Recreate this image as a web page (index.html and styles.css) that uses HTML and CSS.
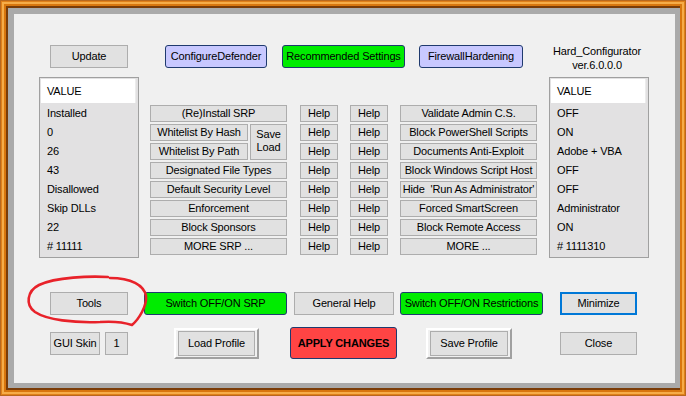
FILE: index.html
```html
<!DOCTYPE html>
<html>
<head>
  <meta charset="UTF-8">
  <title>Hard_Configurator</title>
  <link rel="stylesheet" href="styles.css">
</head>
<body>
  <div class="window">
    <div class="client">

      <div class="row-top">
        <button class="btn btn-update">Update</button>
        <button class="btn btn-blue btn-defender">ConfigureDefender</button>
        <button class="btn btn-green btn-recommended">Recommended Settings</button>
        <button class="btn btn-blue btn-firewall">FirewallHardening</button>
        <div class="title">Hard_Configurator<br>ver.6.0.0.0</div>
      </div>

      <div class="row-main">
        <div class="list list-left">
          <div class="list-head">VALUE</div>
          <div class="list-item">Installed</div>
          <div class="list-item">0</div>
          <div class="list-item">26</div>
          <div class="list-item">43</div>
          <div class="list-item">Disallowed</div>
          <div class="list-item">Skip DLLs</div>
          <div class="list-item">22</div>
          <div class="list-item"># 11111</div>
        </div>

        <div class="options">
          <button class="btn col-a">(Re)Install SRP</button>
          <button class="btn col-h1">Help</button>
          <button class="btn col-h2">Help</button>
          <button class="btn col-c">Validate Admin C.S.</button>

          <button class="btn col-hash">Whitelist By Hash</button>
          <button class="btn col-save">Save<br>Load</button>
          <button class="btn col-h1">Help</button>
          <button class="btn col-h2">Help</button>
          <button class="btn col-c">Block PowerShell Scripts</button>

          <button class="btn col-hash">Whitelist By Path</button>
          <button class="btn col-h1">Help</button>
          <button class="btn col-h2">Help</button>
          <button class="btn col-c">Documents Anti-Exploit</button>

          <button class="btn col-a">Designated File Types</button>
          <button class="btn col-h1">Help</button>
          <button class="btn col-h2">Help</button>
          <button class="btn col-c">Block Windows Script Host</button>

          <button class="btn col-a">Default Security Level</button>
          <button class="btn col-h1">Help</button>
          <button class="btn col-h2">Help</button>
          <button class="btn col-c">Hide &nbsp;'Run As Administrator'</button>

          <button class="btn col-a">Enforcement</button>
          <button class="btn col-h1">Help</button>
          <button class="btn col-h2">Help</button>
          <button class="btn col-c">Forced SmartScreen</button>

          <button class="btn col-a">Block Sponsors</button>
          <button class="btn col-h1">Help</button>
          <button class="btn col-h2">Help</button>
          <button class="btn col-c">Block Remote Access</button>

          <button class="btn col-a">MORE SRP ...</button>
          <button class="btn col-h1">Help</button>
          <button class="btn col-h2">Help</button>
          <button class="btn col-c">MORE ...</button>
        </div>

        <div class="list list-right">
          <div class="list-head">VALUE</div>
          <div class="list-item">OFF</div>
          <div class="list-item">ON</div>
          <div class="list-item">Adobe + VBA</div>
          <div class="list-item">OFF</div>
          <div class="list-item">OFF</div>
          <div class="list-item">Administrator</div>
          <div class="list-item">ON</div>
          <div class="list-item"># 1111310</div>
        </div>
      </div>

      <div class="row-actions">
        <button class="btn btn-tools">Tools</button>
        <button class="btn btn-green btn-srp">Switch OFF/ON SRP</button>
        <button class="btn btn-general">General Help</button>
        <button class="btn btn-green btn-restr">Switch OFF/ON Restrictions</button>
        <button class="btn btn-focus btn-minimize">Minimize</button>
      </div>

      <div class="row-bottom">
        <button class="btn btn-skin">GUI Skin</button>
        <button class="btn btn-skin-num">1</button>
        <div class="raised raised-load"><button class="btn">Load Profile</button></div>
        <button class="btn btn-apply">APPLY CHANGES</button>
        <div class="raised raised-save"><button class="btn">Save Profile</button></div>
        <button class="btn btn-close">Close</button>
      </div>

    </div>

    <!-- red hand-drawn mark round the Tools button -->
    <svg class="mark" width="686" height="396" viewBox="0 0 686 396">
      <path d="M108 277 C90 276 56 277 39 285 C27 291 25 305 35 312 C47 320 74 323 100 322 C114 321 126 323 132 325 C139 319 147 306 146 296 C144 285 131 278 110 278"
            fill="none" stroke="#e8222a" stroke-width="2.6" stroke-linecap="round" stroke-linejoin="round"/>
    </svg>
  </div>
</body>
</html>
```

FILE: styles.css
```css
body {
  margin: 0;
  background-color: #f0f0f0;
  font-family: "Liberation Sans", Arial, sans-serif;
  font-size: 11px;
  letter-spacing: -0.15px;
  color: #000000;
}

.window {
  position: relative;
  width: 686px;
  height: 396px;
  box-sizing: border-box;
  padding: 8px 6px 8px 8px;
  background-color: #e8881c;
  box-shadow:
    inset 0 0 0 1px #b8681e,
    inset 0 0 0 2px #e0801a,
    inset 0 0 0 4px #f6ac48,
    inset 0 0 0 6px #d8760e,
    inset 0 0 0 8px #7a3c08;
}

.client {
  height: 100%;
  box-sizing: border-box;
  border-style: solid;
  border-width: 6px 5px 5px 6px;
  border-color: #aaaaaa;
  background-color: #f0f0f0;
}

.btn {
  display: flex;
  align-items: center;
  justify-content: center;
  box-sizing: border-box;
  margin: 0;
  padding: 0;
  border: 1px solid #adadad;
  background-color: #e1e1e1;
  font: inherit;
  letter-spacing: inherit;
  color: #000000;
  white-space: nowrap;
  line-height: 13px;
}

.btn-blue {
  background-color: #c8c8ff;
  border-color: #1f3a6e;
  border-radius: 3px;
}

.btn-green {
  background-color: #00ec00;
  border-color: #1f3a6e;
  border-radius: 3px;
}

.btn-focus {
  border: 2px solid #0078d7;
}

/* top row */
.row-top {
  display: flex;
  align-items: flex-start;
  margin-top: 31px;
  height: 23px;
}

.row-top .btn {
  height: 23px;
}

.btn-update { margin-left: 36px; width: 78px; }
.btn-defender { margin-left: 37px; width: 102px; }
.btn-recommended { margin-left: 15px; width: 123px; }
.btn-firewall { margin-left: 14px; width: 104px; }

.title {
  margin-left: 24px;
  margin-top: -1px;
  width: 100px;
  text-align: center;
  line-height: 14px;
}

/* lists and options */
.row-main {
  display: flex;
  align-items: flex-start;
  margin-top: 9px;
}

.list {
  width: 100px;
  height: 181px;
  box-sizing: border-box;
  border: 1px solid #a0a0a0;
  padding: 1px 1px 0 1px;
  background-color: #e2e1e2;
}

.list-left { margin-left: 25px; }
.list-right { margin-left: 12px; }

.list-head {
  height: 24px;
  line-height: 24px;
  padding-left: 6px;
  width: 88px;
  background-color: #ffffff;
  border-right: 1px solid #ececec;
}

.list-item {
  height: 19px;
  line-height: 20px;
  padding-left: 6px;
}

.options {
  display: grid;
  grid-template-columns: 98px 2px 37px 13px 38px 12px 38px 12px 137px;
  grid-auto-rows: 17px;
  row-gap: 2px;
  margin-left: 11px;
  margin-top: 28px;
}

.col-a { grid-column: 1 / 4; }
.col-hash { grid-column: 1; }
.col-save { grid-column: 3; grid-row: span 2; padding-bottom: 2px; }
.col-h1 { grid-column: 5; }
.col-h2 { grid-column: 7; }
.col-c { grid-column: 9; }

/* action rows */
.row-actions {
  display: flex;
  align-items: flex-start;
  margin-top: 34px;
  height: 23px;
}

.row-actions .btn {
  height: 23px;
}

.btn-tools { margin-left: 36px; width: 78px; }
.btn-srp { margin-left: 16px; width: 143px; }
.btn-general { margin-left: 7px; width: 100px; }
.btn-restr { margin-left: 6px; width: 143px; }
.btn-minimize { margin-left: 17px; width: 77px; }

.row-bottom {
  display: flex;
  align-items: center;
  margin-top: 12px;
  height: 32px;
}

.btn-skin { margin-left: 36px; width: 50px; height: 23px; }
.btn-skin-num { margin-left: 5px; width: 23px; height: 23px; }
.btn-close { margin-left: 48px; width: 77px; height: 23px; }

.raised {
  display: flex;
  box-sizing: border-box;
  height: 31px;
  border: 2px solid;
  border-color: #ffffff #a0a0a0 #a0a0a0 #ffffff;
  padding: 1px 2px;
  background-color: #f0f0f0;
}

.raised .btn {
  flex: 1;
}

.raised-load { margin-left: 46px; width: 85px; }
.raised-save { margin-left: 29px; width: 86px; }

.btn-apply {
  margin-left: 31px;
  width: 107px;
  height: 32px;
  background-color: #ff4444;
  border-color: #1f3a6e;
  border-radius: 3px;
  font-weight: bold;
}

.mark {
  position: absolute;
  left: 0;
  top: 0;
  pointer-events: none;
}
```
